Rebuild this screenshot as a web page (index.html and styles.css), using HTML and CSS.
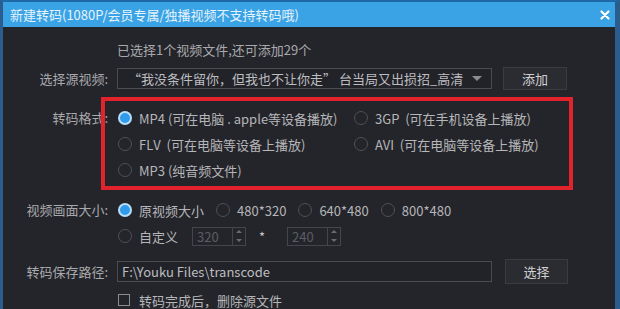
FILE: index.html
```html
<!DOCTYPE html>
<html lang="zh-CN">
<head>
<meta charset="utf-8">
<title>新建转码</title>
<link rel="stylesheet" href="styles.css">
</head>
<body>
<div class="window">
  <div class="titlebar">
    <span class="title">新建转码(1080P/会员专属/独播视频不支持转码哦)</span>
    <svg class="close" width="10" height="10" viewBox="0 0 10 10"><path d="M1.5 1.5 L8.5 8.5 M8.5 1.5 L1.5 8.5" stroke="#ffffff" stroke-width="2.2" stroke-linecap="round"/></svg>
  </div>
  <div class="content">
    <div class="row info">
      <div class="label"></div>
      <div class="field">已选择1个视频文件,还可添加29个</div>
    </div>
    <div class="row src">
      <div class="label">选择源视频:</div>
      <div class="field">
        <div class="select"><span class="select-text">“我没条件留你，但我也不让你走” 台当局又出损招_高清</span><span class="caret"></span></div>
        <div class="btn">添加</div>
      </div>
    </div>
    <div class="row fmt">
      <div class="label">转码格式:</div>
      <div class="field grid2">
        <div class="opt"><span class="radio on"></span><span>MP4 (可在电脑 . apple等设备播放)</span></div>
        <div class="opt"><span class="radio"></span><span>3GP&nbsp; (可在手机设备上播放)</span></div>
        <div class="opt"><span class="radio"></span><span>FLV&nbsp; (可在电脑等设备上播放)</span></div>
        <div class="opt"><span class="radio"></span><span>AVI&nbsp; (可在电脑等设备上播放)</span></div>
        <div class="opt"><span class="radio"></span><span>MP3 (纯音频文件)</span></div>
      </div>
    </div>
    <div class="row size">
      <div class="label">视频画面大小:</div>
      <div class="field col">
        <div class="optline">
          <div class="opt"><span class="radio on"></span><span>原视频大小</span></div>
          <div class="opt"><span class="radio"></span><span>480*320</span></div>
          <div class="opt"><span class="radio"></span><span>640*480</span></div>
          <div class="opt"><span class="radio"></span><span>800*480</span></div>
        </div>
        <div class="optline">
          <div class="opt"><span class="radio"></span><span>自定义</span></div>
          <div class="spin"><span class="spin-val">320</span><span class="spin-btns"><i class="up"></i><i class="down"></i></span></div>
          <span class="times">*</span>
          <div class="spin"><span class="spin-val">240</span><span class="spin-btns"><i class="up"></i><i class="down"></i></span></div>
        </div>
      </div>
    </div>
    <div class="row path">
      <div class="label">转码保存路径:</div>
      <div class="field">
        <div class="input">F:\Youku Files\transcode</div>
        <div class="btn">选择</div>
      </div>
    </div>
    <div class="row chk">
      <div class="label"></div>
      <div class="field"><span class="checkbox"></span><span>转码完成后，删除源文件</span></div>
    </div>
  </div>
  <div class="highlight"></div>
</div>
</body>
</html>
```
FILE: styles.css
```css
html, body {
  margin: 0;
  padding: 0;
  background: #24252b;
}
body {
  width: 620px;
  height: 309px;
  overflow: hidden;
  font-family: "Noto Sans CJK SC", "Noto Sans", sans-serif;
  font-size: 13px;
}
.window {
  position: relative;
  width: 620px;
  height: 309px;
  box-sizing: border-box;
  border-top: 2px solid #1c69a6;
  border-left: 3px solid #2a5d8d;
  border-right: 5px solid #2a5d8d;
  background: #24252b;
  overflow: hidden;
}
.titlebar {
  height: 25px;
  background: #39a3e5;
  display: flex;
  align-items: center;
  justify-content: space-between;
  padding: 0 5px 0 7px;
  color: #e6f3fc;
}
.title {
  font-size: 13px;
  line-height: 25px;
}
.close {
  display: block;
}
.content {
  display: flex;
  flex-direction: column;
  color: #a9a9ac;
}
.row {
  display: flex;
  align-items: flex-start;
}
.label {
  width: 105px;
  flex: none;
  text-align: right;
  white-space: nowrap;
}
.field {
  margin-left: 9px;
  display: flex;
  align-items: center;
}
.info {
  margin-top: 13px;
  height: 20px;
  line-height: 20px;
}
.src {
  margin-top: 7px;
  height: 23px;
  align-items: center;
}
.select {
  width: 375px;
  height: 21px;
  box-sizing: border-box;
  border: 1px solid #4b4c52;
  background: #222328;
  display: flex;
  align-items: center;
  justify-content: space-between;
  padding: 0 9px 0 10px;
  color: #bdbdc0;
  white-space: nowrap;
}
.caret {
  width: 0;
  height: 0;
  border-left: 5px solid transparent;
  border-right: 5px solid transparent;
  border-top: 5px solid #8a8b90;
}
.btn {
  margin-left: 11px;
  width: 64px;
  height: 23px;
  box-sizing: border-box;
  border: 1px solid #3b3c42;
  background: #2b2c31;
  color: #d0d0d2;
  display: flex;
  align-items: center;
  justify-content: center;
}
.fmt {
  margin-top: 15px;
}
.fmt .label {
  line-height: 26px;
}
.grid2 {
  display: grid;
  grid-template-columns: 236px auto;
  grid-auto-rows: 26px;
  align-items: center;
}
.opt {
  display: flex;
  align-items: center;
  white-space: nowrap;
  color: #b6b6b9;
}
.radio {
  width: 14px;
  height: 14px;
  box-sizing: border-box;
  border-radius: 50%;
  border: 1px solid #505157;
  margin: 0 7px 0 1px;
  flex: none;
}
.radio.on {
  background: #2f9bea;
  border: 2px solid #b8def8;
}
.size {
  margin-top: 14px;
}
.size .label {
  line-height: 26px;
}
.col {
  flex-direction: column;
  align-items: flex-start;
}
.optline {
  display: flex;
  align-items: center;
  height: 26px;
  gap: 11px;
}
.spin {
  margin-left: 3px;
  width: 54px;
  height: 19px;
  box-sizing: border-box;
  border: 1px solid #45464c;
  display: flex;
  align-items: stretch;
  justify-content: space-between;
}
.spin-val {
  color: #5c5d62;
  padding-left: 4px;
  line-height: 17px;
}
.spin-btns {
  width: 12px;
  border-left: 1px solid #45464c;
  display: flex;
  flex-direction: column;
  justify-content: space-around;
  align-items: center;
}
.spin-btns i {
  width: 0;
  height: 0;
  border-left: 3px solid transparent;
  border-right: 3px solid transparent;
}
.spin-btns .up {
  border-bottom: 3px solid #6a6b70;
}
.spin-btns .down {
  border-top: 3px solid #6a6b70;
}
.times {
  width: 14px;
  margin-left: 2px;
  color: #c8c8ca;
  align-self: flex-start;
  margin-top: 4px;
}
.path {
  margin-top: 10px;
  height: 25px;
  align-items: center;
}
.input {
  width: 375px;
  height: 21px;
  box-sizing: border-box;
  border: 1px solid #4b4c52;
  background: #222328;
  padding-left: 4px;
  line-height: 19px;
  color: #bdbdc0;
}
.path .btn {
  margin-left: 13px;
  width: 63px;
  height: 25px;
}
.chk {
  margin-top: 6px;
  height: 20px;
  align-items: center;
}
.chk .field {
  color: #b6b6b9;
}
.checkbox {
  width: 12px;
  height: 12px;
  box-sizing: border-box;
  border: 1px solid #8b8c90;
  margin: 0 9px 0 1px;
}
.highlight {
  position: absolute;
  left: 98px;
  top: 95px;
  width: 472px;
  height: 93px;
  box-sizing: border-box;
  border: 4px solid #e2232b;
  pointer-events: none;
}
```
